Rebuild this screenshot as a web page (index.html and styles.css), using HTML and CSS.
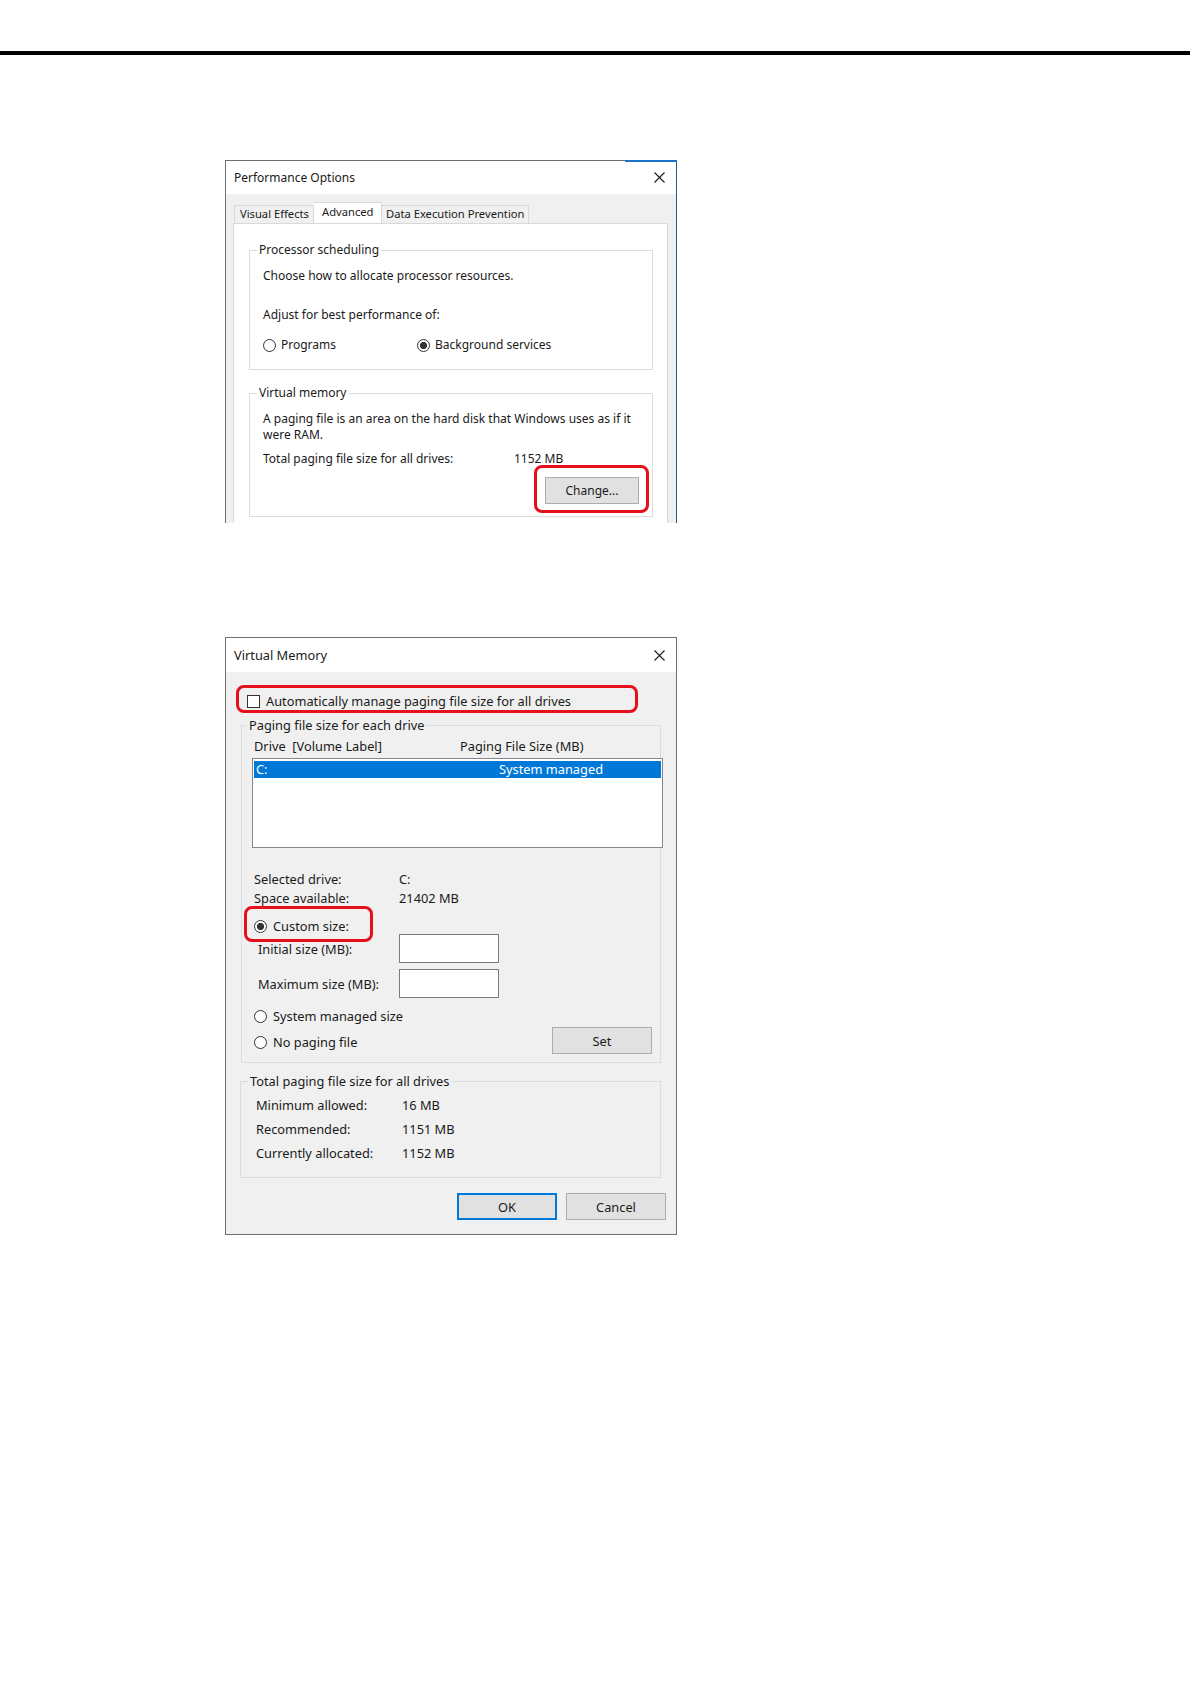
FILE: index.html
```html
<!DOCTYPE html>
<html lang="en">
<head>
    <meta charset="UTF-8">
    <meta name="viewport" content="width=device-width, initial-scale=1.0">
    <title>Performance Options / Virtual Memory</title>
    <link rel="stylesheet" href="styles.css">
</head>
<body>

    <div class="rule"></div>

    <!-- Performance Options (cropped at the bottom) -->
    <div class="dialog perf">
        <div class="titlebar">
            <span>Performance Options</span>
            <svg class="close" width="11" height="11" viewBox="0 0 11 11"><path d="M0.5 0.5L10.5 10.5M10.5 0.5L0.5 10.5" stroke="#1a1a1a" stroke-width="1.1" fill="none"/></svg>
        </div>
        <div class="perf-body">
            <div class="tabs">
                <div class="tab tab-ve">Visual Effects</div>
                <div class="tab tab-adv active">Advanced</div>
                <div class="tab tab-dep">Data Execution Prevention</div>
            </div>
            <div class="tab-panel">
                <fieldset class="group sched">
                    <legend>Processor scheduling</legend>
                    <p class="line">Choose how to allocate processor resources.</p>
                    <p class="line adjust">Adjust for best performance of:</p>
                    <div class="radio-row">
                        <label class="option programs"><span class="radio"></span>Programs</label>
                        <label class="option"><span class="radio checked"></span>Background services</label>
                    </div>
                </fieldset>
                <fieldset class="group vmem">
                    <legend>Virtual memory</legend>
                    <p class="line">A paging file is an area on the hard disk that Windows uses as if it<br>were RAM.</p>
                    <div class="total-row">
                        <span class="total-label">Total paging file size for all drives:</span>
                        <span>1152 MB</span>
                    </div>
                    <div class="change-row">
                        <div class="mark mark-change"><button class="btn btn-change">Change...</button></div>
                    </div>
                </fieldset>
            </div>
        </div>
    </div>

    <!-- Virtual Memory -->
    <div class="dialog vm">
        <div class="titlebar">
            <span>Virtual Memory</span>
            <svg class="close" width="11" height="11" viewBox="0 0 11 11"><path d="M0.5 0.5L10.5 10.5M10.5 0.5L0.5 10.5" stroke="#1a1a1a" stroke-width="1.1" fill="none"/></svg>
        </div>
        <div class="vm-body">
            <div class="mark mark-auto">
                <label class="option check-option"><span class="check"></span>Automatically manage paging file size for all drives</label>
            </div>

            <fieldset class="group drives">
                <legend>Paging file size for each drive</legend>
                <div class="list-head">
                    <span class="col-drive">Drive&nbsp; [Volume Label]</span>
                    <span>Paging File Size (MB)</span>
                </div>
                <div class="listbox">
                    <div class="list-row selected">
                        <span class="col-c">C:</span>
                        <span>System managed</span>
                    </div>
                </div>

                <div class="info">
                    <div class="info-row"><span class="info-label">Selected drive:</span><span>C:</span></div>
                    <div class="info-row"><span class="info-label">Space available:</span><span>21402 MB</span></div>
                </div>

                <div class="mark mark-custom">
                    <label class="option"><span class="radio checked"></span>Custom size:</label>
                </div>
                <div class="size-row first">
                    <span class="size-label">Initial size (MB):</span>
                    <input class="field" type="text">
                </div>
                <div class="size-row">
                    <span class="size-label">Maximum size (MB):</span>
                    <input class="field" type="text">
                </div>

                <label class="option sys-managed"><span class="radio"></span>System managed size</label>
                <div class="set-row">
                    <label class="option no-paging"><span class="radio"></span>No paging file</label>
                    <button class="btn btn-set">Set</button>
                </div>
            </fieldset>

            <fieldset class="group totals">
                <legend>Total paging file size for all drives</legend>
                <div class="total-line"><span class="t-label">Minimum allowed:</span><span>16 MB</span></div>
                <div class="total-line"><span class="t-label">Recommended:</span><span>1151 MB</span></div>
                <div class="total-line"><span class="t-label">Currently allocated:</span><span>1152 MB</span></div>
            </fieldset>

            <div class="actions">
                <button class="btn btn-ok">OK</button>
                <button class="btn">Cancel</button>
            </div>
        </div>
    </div>

</body>
</html>
```

FILE: styles.css
```css
* {
    box-sizing: border-box;
}
body {
    margin: 0;
    min-height: 1684px;
    background: #fff;
    font-family: "Noto Sans", "Open Sans", sans-serif;
    font-size: 12px;
    line-height: 16px;
    color: #1a1a1a;
}
p {
    margin: 0;
    white-space: nowrap;
}

/* thick rule at the top of the page */
.rule {
    height: 4px;
    margin-top: 51px;
    background: #000;
}

/* window frame */
.dialog {
    position: relative;
    width: 452px;
    margin-left: 225px;
    border: 1px solid #6e6e6e;
    background: #f0f0f0;
}
.titlebar {
    display: flex;
    justify-content: space-between;
    align-items: center;
    height: 33px;
    padding: 0 11px 0 8px;
    background: #fff;
}
.close {
    display: block;
}

/* Performance Options */
.perf {
    display: flex;
    flex-direction: column;
    height: 363px;
    margin-top: 105px;
    border-bottom: none;
    border-right-color: #2c5a86;
}
.perf::before {
    content: "";
    position: absolute;
    top: -1px;
    right: -1px;
    width: 52px;
    height: 2px;
    background: #1a73c8;
}
.perf-body {
    flex: 1;
    display: flex;
    flex-direction: column;
    padding: 8px 8px 0 7px;
}
.tabs {
    display: flex;
    align-items: flex-end;
    height: 21px;
    margin-left: 1px;
    font-size: 11.2px;
}
.tab {
    height: 18px;
    padding-left: 5px;
    border: 1px solid #d9d9d9;
    border-bottom: none;
    background: #f0f0f0;
    white-space: nowrap;
}
.tab + .tab {
    border-left: none;
}
.tab.active {
    height: 21px;
    padding-top: 1px;
    background: #fff;
}
.tab-ve { width: 80px; }
.tab-adv { width: 68px; padding-left: 8px; }
.tab-dep { width: 147px; padding-left: 4px; }

.tab-panel {
    flex: 1;
    padding: 18px 14px 0 15px;
    border: 1px solid #d9d9d9;
    border-bottom: none;
    background: #fff;
}

/* group boxes */
.group {
    min-width: 0;
    margin: 0;
    padding: 10px 13px 16px 13px;
    border: 1px solid #dcdcdc;
}
.group legend {
    margin-left: -6px;
    padding: 0 2px;
    line-height: 16px;
    white-space: nowrap;
}
.sched .adjust {
    margin-top: 23px;
}
.radio-row {
    display: flex;
    margin-top: 14px;
}
.programs {
    width: 154px;
}
.vmem {
    margin-top: 15px;
    padding-bottom: 3px;
}
.total-row {
    display: flex;
    margin-top: 8px;
    white-space: nowrap;
}
.total-label {
    width: 251px;
}
.change-row {
    display: flex;
    justify-content: flex-end;
    margin: -2px -10px 0 0;
}

/* red call-out frames */
.mark {
    border: 3px solid #e4101c;
    border-radius: 8px;
}
.mark-change {
    padding: 9px 7px 6px 8px;
}

/* controls */
.option {
    display: flex;
    align-items: center;
    gap: 5px;
    white-space: nowrap;
}
.radio {
    flex: none;
    width: 13px;
    height: 13px;
    border: 1px solid #333;
    border-radius: 50%;
    background: #fff;
}
.radio.checked {
    background: radial-gradient(circle, #333 0 3.3px, #fff 3.9px);
}
.check {
    flex: none;
    width: 13px;
    height: 13px;
    border: 1px solid #333;
    background: #fff;
}
.check-option {
    gap: 6px;
}
.btn {
    width: 100px;
    height: 27px;
    padding: 0;
    border: 1px solid #adadad;
    background: #e1e1e1;
    font: inherit;
    color: inherit;
}
.btn-change {
    width: 94px;
}
.btn-ok {
    border: 2px solid #0078d7;
}
.field {
    width: 100px;
    height: 29px;
    border: 1px solid #7a7a7a;
    background: #fff;
}

/* Virtual Memory */
.vm {
    margin-top: 114px;
    font-size: 12.8px;
}
.vm .titlebar {
    height: 34px;
}
.vm-body {
    padding: 13px 0 14px 0;
}
.mark-auto {
    width: 402px;
    height: 28px;
    margin-left: 10px;
    padding: 5px 0 0 8px;
}
.drives {
    width: 420px;
    margin-top: 4px;
    margin-left: 15px;
    padding: 5px 12px 8px 12px;
}
.drives legend {
    margin-left: -7px;
}
.list-head {
    display: flex;
    white-space: nowrap;
}
.col-drive {
    width: 206px;
}
.listbox {
    width: 411px;
    height: 90px;
    margin: 4px 0 0 -2px;
    padding: 2px 1px;
    border: 1px solid #828790;
    background: #fff;
}
.list-row {
    display: flex;
    height: 17px;
    padding-left: 2px;
    line-height: 17px;
    white-space: nowrap;
}
.list-row.selected {
    background: #0078d7;
    color: #fff;
}
.col-c {
    width: 243px;
}
.info {
    margin-top: 22px;
    line-height: 19px;
}
.info-row {
    display: flex;
}
.info-label {
    width: 145px;
}
.mark-custom {
    width: 129px;
    height: 36px;
    margin: -2px 0 0 -10px;
    padding: 9px 0 0 7px;
}
.mark-custom .option {
    gap: 6px;
}
.size-row {
    display: flex;
    align-items: center;
    margin-top: 6px;
}
.size-row.first {
    margin-top: -8px;
}
.size-label {
    width: 145px;
    padding-left: 4px;
}
.sys-managed {
    margin-top: 10px;
    gap: 6px;
}
.set-row {
    display: flex;
    justify-content: space-between;
    align-items: center;
    margin: 3px -4px 0 0;
}
.no-paging {
    padding-top: 3px;
    gap: 6px;
}
.totals {
    width: 421px;
    margin-top: 10px;
    margin-left: 14px;
    padding: 4px 12px 12px 15px;
}
.totals legend {
    margin-left: -8px;
}
.total-line {
    display: flex;
    line-height: 24px;
}
.t-label {
    width: 146px;
}
.actions {
    display: flex;
    justify-content: flex-end;
    gap: 9px;
    margin: 15px 10px 0 0;
}
```
